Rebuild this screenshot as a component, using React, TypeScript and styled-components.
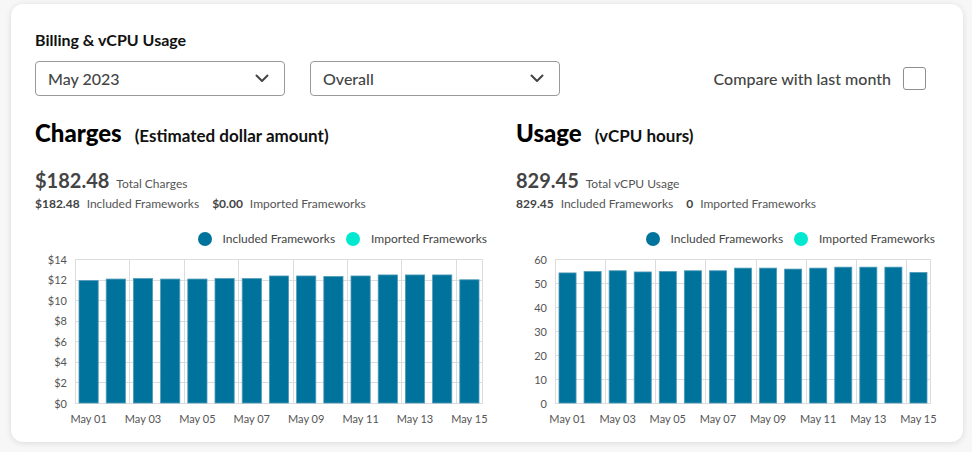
import React from "react";
import styled, { createGlobalStyle } from "styled-components";

const GlobalStyle = createGlobalStyle`
  html, body {
    margin: 0;
    padding: 0;
    background: #f7f7f7;
    font-family: Lato, "Noto Sans", "Liberation Sans", sans-serif;
    color: #000;
  }
  * { box-sizing: border-box; }
`;

const Page = styled.div`
  padding: 4px 9px 10px 11px;
`;

const Card = styled.div`
  background: #fff;
  border-radius: 12px;
  box-shadow: 0 1px 6px rgba(0, 0, 0, 0.12);
  height: 438px;
  padding: 26px 28px 0 24px;
  display: flex;
  flex-direction: column;
`;

const Title = styled.h1`
  margin: 0;
  font-size: 16px;
  font-weight: 700;
  line-height: 20px;
  color: #111;
`;

const Controls = styled.div`
  display: flex;
  align-items: center;
  gap: 25px;
  margin-top: 11px;
`;

const Select = styled.div`
  width: 250px;
  height: 35px;
  border: 1px solid #999;
  border-radius: 4px;
  display: flex;
  align-items: center;
  justify-content: space-between;
  padding: 0 15px 0 12px;
  font-size: 16px;
  font-weight: 500;
  color: #444;
`;

const Compare = styled.label`
  margin-left: auto;
  margin-right: 9px;
  display: flex;
  align-items: center;
  gap: 12px;
  font-size: 16px;
  font-weight: 500;
  color: #444;
`;

const Checkbox = styled.span`
  width: 23px;
  height: 23px;
  border: 1px solid #8f8f8f;
  border-radius: 3px;
  display: inline-block;
`;

const Sections = styled.div`
  display: grid;
  grid-template-columns: 452px 419px;
  column-gap: 29px;
  margin-top: 22px;
`;

const Section = styled.section`
  display: flex;
  flex-direction: column;
`;

const HeadingRow = styled.div`
  display: flex;
  align-items: baseline;
  gap: 13px;
`;

const Heading = styled.h2`
  margin: 0;
  font-size: 24px;
  font-weight: 900;
  line-height: 30px;
  color: #000;
`;

const SubHeading = styled.span`
  font-size: 17px;
  font-weight: 700;
  color: #111;
`;

const TotalRow = styled.div`
  display: flex;
  align-items: baseline;
  gap: 7px;
  margin-top: 20px;
  line-height: 24px;
`;

const TotalValue = styled.span`
  font-size: 20px;
  font-weight: 700;
  color: #444;
`;

const SmallLabel = styled.span`
  font-size: 12px;
  color: #555;
`;

const BreakdownRow = styled.div`
  display: flex;
  align-items: baseline;
  gap: 13px;
  margin-top: 0;
  line-height: 16px;
`;

const BreakdownItem = styled.span`
  display: inline-flex;
  align-items: baseline;
  gap: 7px;
`;

const BreakdownValue = styled.span`
  font-size: 12px;
  font-weight: 700;
  color: #444;
`;

const Legend = styled.div`
  display: flex;
  justify-content: flex-end;
  align-items: center;
  gap: 11px;
  margin-top: 19px;
  line-height: 16px;
`;

const LegendItem = styled.span`
  display: inline-flex;
  align-items: center;
  gap: 11px;
  font-size: 12px;
  color: #444;
`;

const Dot = styled.span<{ $color: string }>`
  width: 14px;
  height: 14px;
  border-radius: 50%;
  background: ${(p) => p.$color};
  display: inline-block;
`;

const ChartSvg = styled.svg`
  display: block;
  margin-top: 2px;
  overflow: visible;
`;

const BAR = "#00739D";
const IMPORTED = "#00E8CF";

type ChartProps = {
  data: number[];
  max: number;
  step: number;
  format: (v: number) => string;
  width: number;
  plotLeft: number;
  plotWidth: number;
};

function Chart({ data, max, step, format, width, plotLeft, plotWidth }: ChartProps) {
  const top = 10;
  const plotH = 144;
  const bottom = top + plotH;
  const cat = plotWidth / data.length;
  const y = (v: number) => top + plotH * (1 - v / max);
  const ticks: number[] = [];
  for (let v = 0; v <= max; v += step) ticks.push(v);
  return (
    <ChartSvg width={width} height={180} viewBox={`0 0 ${width} 180`}>
      {ticks.map((t) => (
        <line
          key={`h${t}`}
          x1={plotLeft}
          x2={plotLeft + plotWidth}
          y1={Math.round(y(t)) + 0.5}
          y2={Math.round(y(t)) + 0.5}
          stroke="#dcdcdc"
          strokeWidth={1}
        />
      ))}
      {data.map((_, i) =>
        i % 2 === 0 ? (
          <line
            key={`v${i}`}
            x1={Math.round(plotLeft + i * cat) + 0.5}
            x2={Math.round(plotLeft + i * cat) + 0.5}
            y1={top}
            y2={bottom}
            stroke="#dcdcdc"
          />
        ) : null
      )}
      <line
        x1={plotLeft + plotWidth - 0.5}
        x2={plotLeft + plotWidth - 0.5}
        y1={top}
        y2={bottom}
        stroke="#dcdcdc"
      />
      {data.map((v, i) => {
        const x = plotLeft + i * cat + 4;
        const w = cat - 8;
        return (
          <rect
            key={`b${i}`}
            x={x}
            y={y(v)}
            width={w}
            height={bottom - y(v)}
            fill={BAR}
            stroke="#4f9bb8"
            strokeWidth={0.8}
          />
        );
      })}
      {ticks.map((t) => (
        <text
          key={`l${t}`}
          x={plotLeft - 8}
          y={y(t)}
          textAnchor="end"
          dominantBaseline="central"
          fontSize={11}
          fill="#555"
          fontFamily="Lato, sans-serif"
        >
          {format(t)}
        </text>
      ))}
      {data.map((_, i) =>
        i % 2 === 0 ? (
          <text
            key={`x${i}`}
            x={plotLeft + (i + 0.5) * cat}
            y={169}
            textAnchor="middle"
            dominantBaseline="central"
            fontSize={11}
            fill="#555"
            fontFamily="Lato, sans-serif"
          >
            {`May ${String(i + 1).padStart(2, "0")}`}
          </text>
        ) : null
      )}
    </ChartSvg>
  );
}

const charges = [11.9, 12.05, 12.1, 12.05, 12.05, 12.1, 12.1, 12.35, 12.35, 12.3, 12.35, 12.45, 12.45, 12.45, 11.98];
const usage = [54.2, 54.8, 55.1, 54.6, 54.8, 55.1, 55.1, 56.2, 56.2, 55.8, 56.2, 56.6, 56.6, 56.6, 54.4];

function ChevronDown() {
  return (
    <svg width="14" height="9" viewBox="0 0 14 9">
      <path d="M1.5 1.5 L7 7 L12.5 1.5" fill="none" stroke="#444" strokeWidth="2" strokeLinecap="round" strokeLinejoin="round" />
    </svg>
  );
}

function LegendBlock() {
  return (
    <Legend>
      <LegendItem>
        <Dot $color={BAR} />
        Included Frameworks
      </LegendItem>
      <LegendItem>
        <Dot $color={IMPORTED} />
        Imported Frameworks
      </LegendItem>
    </Legend>
  );
}

export default function App() {
  return (
    <>
      <GlobalStyle />
      <Page>
        <Card>
          <Title>Billing &amp; vCPU Usage</Title>
          <Controls>
            <Select>
              May 2023
              <ChevronDown />
            </Select>
            <Select>
              Overall
              <ChevronDown />
            </Select>
            <Compare>
              Compare with last month
              <Checkbox />
            </Compare>
          </Controls>
          <Sections>
            <Section>
              <HeadingRow>
                <Heading>Charges</Heading>
                <SubHeading>(Estimated dollar amount)</SubHeading>
              </HeadingRow>
              <TotalRow>
                <TotalValue>$182.48</TotalValue>
                <SmallLabel>Total Charges</SmallLabel>
              </TotalRow>
              <BreakdownRow>
                <BreakdownItem>
                  <BreakdownValue>$182.48</BreakdownValue>
                  <SmallLabel>Included Frameworks</SmallLabel>
                </BreakdownItem>
                <BreakdownItem>
                  <BreakdownValue>$0.00</BreakdownValue>
                  <SmallLabel>Imported Frameworks</SmallLabel>
                </BreakdownItem>
              </BreakdownRow>
              <LegendBlock />
              <Chart
                data={charges}
                max={14}
                step={2}
                format={(v) => `$${v}`}
                width={452}
                plotLeft={40}
                plotWidth={408}
              />
            </Section>
            <Section>
              <HeadingRow>
                <Heading>Usage</Heading>
                <SubHeading>(vCPU hours)</SubHeading>
              </HeadingRow>
              <TotalRow>
                <TotalValue>829.45</TotalValue>
                <SmallLabel>Total vCPU Usage</SmallLabel>
              </TotalRow>
              <BreakdownRow>
                <BreakdownItem>
                  <BreakdownValue>829.45</BreakdownValue>
                  <SmallLabel>Included Frameworks</SmallLabel>
                </BreakdownItem>
                <BreakdownItem>
                  <BreakdownValue>0</BreakdownValue>
                  <SmallLabel>Imported Frameworks</SmallLabel>
                </BreakdownItem>
              </BreakdownRow>
              <LegendBlock />
              <Chart
                data={usage}
                max={60}
                step={10}
                format={(v) => `${v}`}
                width={419}
                plotLeft={39}
                plotWidth={376}
              />
            </Section>
          </Sections>
        </Card>
      </Page>
    </>
  );
}
